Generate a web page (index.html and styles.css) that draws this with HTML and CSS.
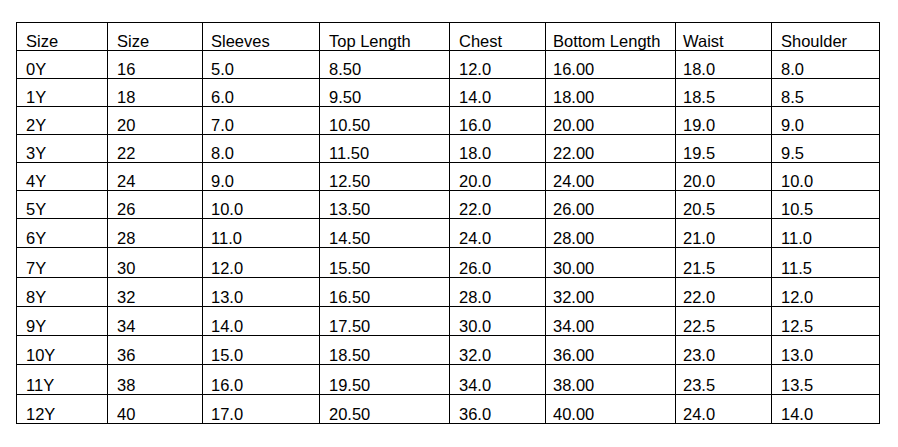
FILE: index.html
```html
<!DOCTYPE html>
<html>
<head>
<meta charset="utf-8">
<link rel="stylesheet" href="styles.css">
</head>
<body>
<table class="size-chart">
  <colgroup>
    <col class="c1"><col class="c2"><col class="c3"><col class="c4"><col class="c5"><col class="c6"><col class="c7"><col class="c8">
  </colgroup>
  <tbody>
    <tr class="short"><td>Size</td><td>Size</td><td>Sleeves</td><td>Top Length</td><td>Chest</td><td>Bottom Length</td><td>Waist</td><td>Shoulder</td></tr>
    <tr class="short"><td>0Y</td><td>16</td><td>5.0</td><td>8.50</td><td>12.0</td><td>16.00</td><td>18.0</td><td>8.0</td></tr>
    <tr class="short"><td>1Y</td><td>18</td><td>6.0</td><td>9.50</td><td>14.0</td><td>18.00</td><td>18.5</td><td>8.5</td></tr>
    <tr class="short"><td>2Y</td><td>20</td><td>7.0</td><td>10.50</td><td>16.0</td><td>20.00</td><td>19.0</td><td>9.0</td></tr>
    <tr class="short"><td>3Y</td><td>22</td><td>8.0</td><td>11.50</td><td>18.0</td><td>22.00</td><td>19.5</td><td>9.5</td></tr>
    <tr class="short"><td>4Y</td><td>24</td><td>9.0</td><td>12.50</td><td>20.0</td><td>24.00</td><td>20.0</td><td>10.0</td></tr>
    <tr class="short"><td>5Y</td><td>26</td><td>10.0</td><td>13.50</td><td>22.0</td><td>26.00</td><td>20.5</td><td>10.5</td></tr>
    <tr class="tall"><td>6Y</td><td>28</td><td>11.0</td><td>14.50</td><td>24.0</td><td>28.00</td><td>21.0</td><td>11.0</td></tr>
    <tr class="tall"><td>7Y</td><td>30</td><td>12.0</td><td>15.50</td><td>26.0</td><td>30.00</td><td>21.5</td><td>11.5</td></tr>
    <tr class="tall"><td>8Y</td><td>32</td><td>13.0</td><td>16.50</td><td>28.0</td><td>32.00</td><td>22.0</td><td>12.0</td></tr>
    <tr class="tall"><td>9Y</td><td>34</td><td>14.0</td><td>17.50</td><td>30.0</td><td>34.00</td><td>22.5</td><td>12.5</td></tr>
    <tr class="tall"><td>10Y</td><td>36</td><td>15.0</td><td>18.50</td><td>32.0</td><td>36.00</td><td>23.0</td><td>13.0</td></tr>
    <tr class="tall"><td>11Y</td><td>38</td><td>16.0</td><td>19.50</td><td>34.0</td><td>38.00</td><td>23.5</td><td>13.5</td></tr>
    <tr class="tall"><td>12Y</td><td>40</td><td>17.0</td><td>20.50</td><td>36.0</td><td>40.00</td><td>24.0</td><td>14.0</td></tr>
  </tbody>
</table>
</body>
</html>
```

FILE: styles.css
```css
html, body {
  margin: 0;
  padding: 0;
  background: #ffffff;
}

body {
  font-family: "Liberation Sans", Arial, sans-serif;
  color: #000000;
}

.size-chart {
  margin: 22px 0 0 16px;
  border-collapse: collapse;
  table-layout: fixed;
  width: 863px;
  font-size: 16.5px;
}

.size-chart td {
  border: 1px solid #000000;
  padding: 0 4px 0 9px;
  line-height: 17px;
  vertical-align: bottom;
  white-space: nowrap;
  overflow: hidden;
}

.size-chart td:nth-child(3) {
  padding-left: 8px;
}

.size-chart td:nth-child(6),
.size-chart td:nth-child(7) {
  padding-left: 7px;
}

.size-chart tr.short {
  height: 28px;
}

.size-chart tr.tall {
  height: 29.3px;
}

.c1 { width: 91px; }
.c2 { width: 95px; }
.c3 { width: 117px; }
.c4 { width: 130px; }
.c5 { width: 96px; }
.c6 { width: 130px; }
.c7 { width: 96px; }
.c8 { width: 108px; }
```
